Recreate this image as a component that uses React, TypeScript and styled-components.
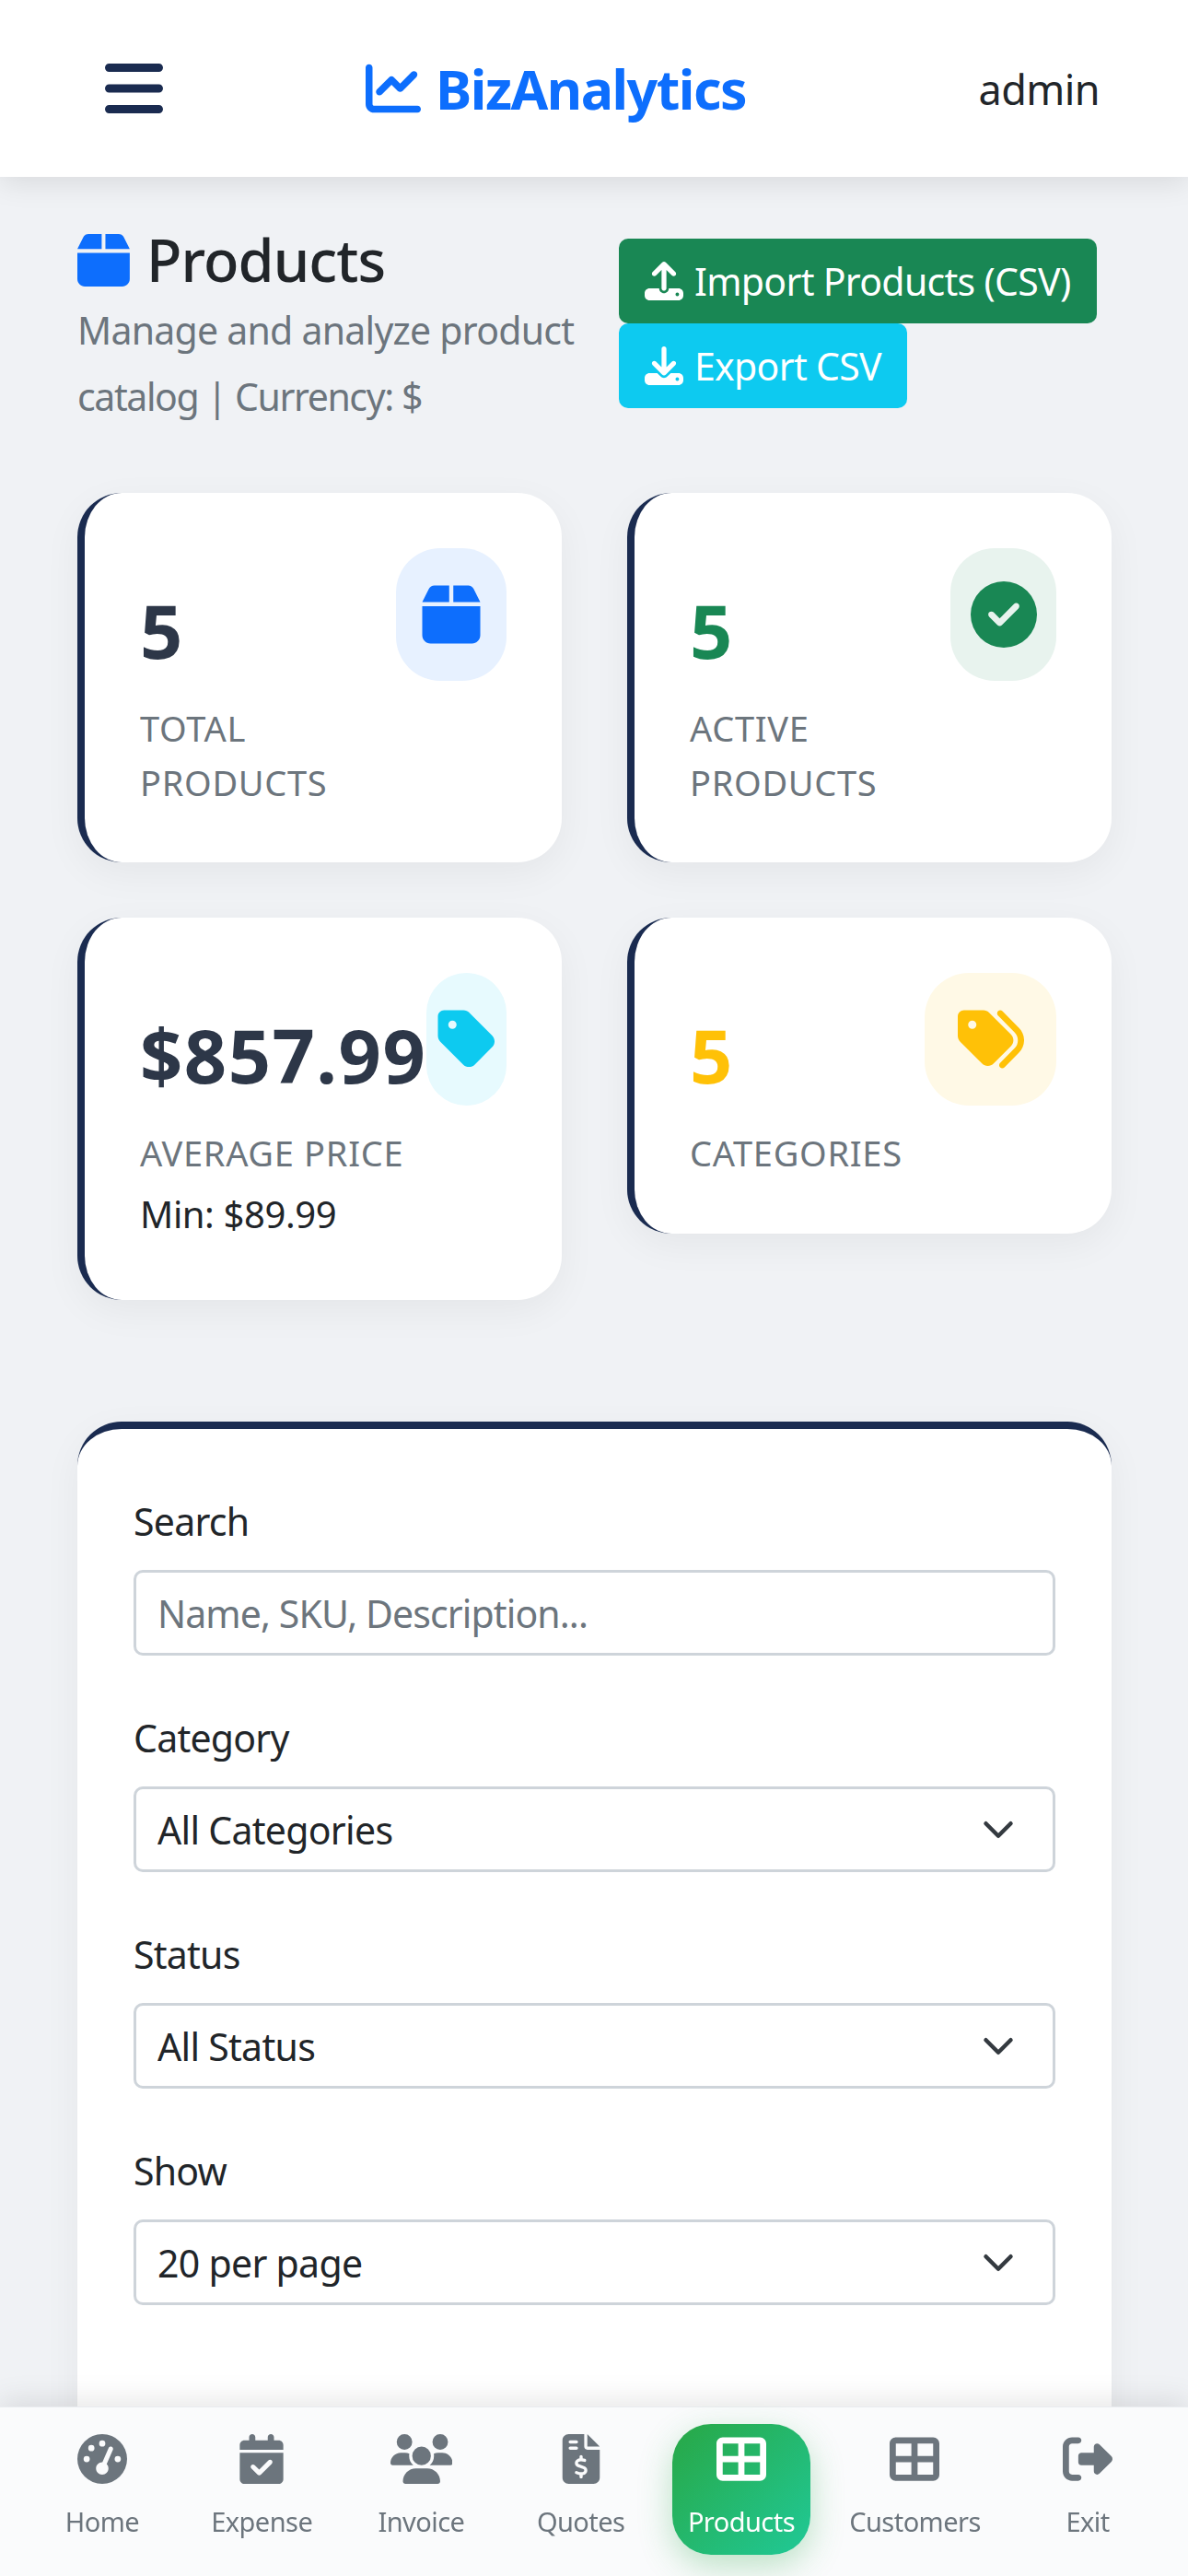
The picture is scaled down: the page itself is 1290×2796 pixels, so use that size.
import React from 'react'
import styled, { createGlobalStyle } from 'styled-components'
import {
  FaBars,
  FaBox,
  FaCalendarCheck,
  FaChartLine,
  FaCircleCheck,
  FaDownload,
  FaFileInvoiceDollar,
  FaGaugeHigh,
  FaRightFromBracket,
  FaTableCellsLarge,
  FaTag,
  FaTags,
  FaUpload,
  FaUsers,
} from 'react-icons/fa6'

const GlobalStyle = createGlobalStyle`
  html, body {
    margin: 0;
    padding: 0;
    height: 100%;
    overflow: hidden;
    background: #f0f2f5;
  }
  body {
    font-family: "Noto Sans", "Open Sans", sans-serif;
    color: #212529;
  }
  * { box-sizing: border-box; }
`

const Navbar = styled.header`
  height: 192px;
  background: #fff;
  display: flex;
  align-items: center;
  padding: 0 96px 0 114px;
  box-shadow: 0 6px 30px rgba(0, 0, 0, 0.1);
  position: relative;
  z-index: 1;
`

const MenuButton = styled.button`
  border: 0;
  padding: 0;
  background: none;
  color: #1a2b50;
  display: flex;
  font-size: 72px;
  svg { width: 0.875em; }
`

const Brand = styled.div`
  margin-left: 220px;
  display: flex;
  align-items: center;
  gap: 16px;
  color: #0d6efd;
  font-size: 59px;
  font-weight: 700;
  letter-spacing: -1.5px;
  svg { font-size: 60px; }
`

const UserName = styled.span`
  margin-left: auto;
  font-size: 45px;
  letter-spacing: -0.6px;
`

const Main = styled.main`
  height: 2604px;
  overflow: hidden;
  padding: 54px 83px 0 84px;
`

const PageHead = styled.div`
  display: grid;
  grid-template-columns: 588px 1fr;
  margin-bottom: 69px;
`

const TitleRow = styled.h1`
  margin: 0;
  display: flex;
  align-items: center;
  gap: 18px;
  font-size: 63px;
  line-height: 72px;
  font-weight: 500;
  letter-spacing: -0.9px;
  svg { color: #0d6efd; font-size: 65px; width: 0.875em; }
`

const Subtitle = styled.p`
  margin: 4px 0 0;
  font-size: 41px;
  line-height: 72px;
  letter-spacing: -0.75px;
  color: #6c757d;
`

const CurrencyNote = styled.span`
  letter-spacing: -1.4px;
`

const ButtonStack = styled.div`
  display: flex;
  flex-direction: column;
  align-items: flex-start;
  padding-top: 13px;
`

const ActionButton = styled.button<{ $bg: string }>`
  border: 0;
  height: 92px;
  padding: 0 28px;
  display: flex;
  align-items: center;
  gap: 12px;
  border-radius: 10px;
  background: ${(p) => p.$bg};
  color: #fff;
  font: inherit;
  font-size: 41px;
  letter-spacing: -0.7px;
  svg { font-size: 42px; }
`

const StatGrid = styled.section`
  display: grid;
  grid-template-columns: 526px 526px;
  justify-content: space-between;
  row-gap: 60px;
  align-items: start;
  margin-bottom: 132px;
`

const StatCard = styled.article<{ $height: number }>`
  height: ${(p) => p.$height}px;
  background: #fff;
  border-left: 8px solid #1a2b50;
  border-radius: 48px;
  padding: 60px 60px 0 60px;
  display: flex;
  justify-content: space-between;
  align-items: flex-start;
  box-shadow: 0 12px 42px rgba(0, 0, 0, 0.05);
`

const StatBody = styled.div`
  padding-top: 37px;
`

const StatValue = styled.div<{ $color: string }>`
  font-size: 81px;
  line-height: 104px;
  font-weight: 700;
  letter-spacing: 1.5px;
  color: ${(p) => p.$color};
`

const StatLabel = styled.div`
  margin-top: 25px;
  font-size: 38px;
  line-height: 59px;
  letter-spacing: 0.7px;
  color: #6c757d;
`

const StatNote = styled.div`
  margin-top: 7px;
  font-size: 40px;
  line-height: 59px;
  letter-spacing: -0.4px;
`

const IconBox = styled.div<{ $bg: string; $color: string; $width: number }>`
  flex: none;
  width: ${(p) => p.$width}px;
  height: 144px;
  border-radius: 48px;
  display: flex;
  align-items: center;
  justify-content: center;
  background: ${(p) => p.$bg};
  color: ${(p) => p.$color};
  font-size: 72px;
`

const FilterCard = styled.section`
  min-height: 1400px;
  background: #fff;
  border-top: 8px solid #1a2b50;
  border-radius: 48px;
  padding: 70px 61px;
  box-shadow: 0 12px 42px rgba(0, 0, 0, 0.05);
`

const Field = styled.div`
  margin-bottom: 59px;
`

const FieldLabel = styled.label`
  display: block;
  margin-bottom: 23px;
  font-size: 41px;
  line-height: 60px;
  letter-spacing: -0.75px;
`

const TextInput = styled.input`
  display: block;
  width: 100%;
  height: 93px;
  padding: 0 23px;
  border: 3px solid #ced4da;
  border-radius: 10px;
  background: #fff;
  font: inherit;
  font-size: 41px;
  letter-spacing: -0.9px;
  color: #212529;
  &::placeholder { color: #6c757d; opacity: 1; }
`

const SelectInput = styled.select`
  display: block;
  width: 100%;
  height: 93px;
  padding: 0 23px;
  border: 3px solid #ced4da;
  border-radius: 10px;
  appearance: none;
  font: inherit;
  font-size: 41px;
  letter-spacing: -0.7px;
  color: #212529;
  background: #fff url("data:image/svg+xml,%3csvg xmlns='http://www.w3.org/2000/svg' viewBox='0 0 16 16'%3e%3cpath fill='none' stroke='%23343a40' stroke-linecap='round' stroke-linejoin='round' stroke-width='2' d='m2 5 6 6 6-6'/%3e%3c/svg%3e") no-repeat right 41px center / 36px 36px;
`

const BottomNav = styled.nav`
  position: fixed;
  left: 0;
  right: 0;
  bottom: 0;
  height: 184px;
  padding: 18px 35px 0 37px;
  display: flex;
  justify-content: space-between;
  align-items: flex-start;
  background: #fafbfc;
  border-top: 1px solid #e9ecef;
  box-shadow: 0 -6px 30px rgba(0, 0, 0, 0.1);
`

const NavItem = styled.a<{ $active?: boolean }>`
  min-width: 148px;
  height: 142px;
  padding: 11px 17px 0;
  border-radius: 42px;
  display: flex;
  flex-direction: column;
  align-items: center;
  color: ${(p) => (p.$active ? '#fff' : '#6c757d')};
  background: ${(p) => (p.$active ? 'linear-gradient(135deg, #28a745, #20c997)' : 'none')};
  box-shadow: ${(p) => (p.$active ? '0 12px 36px rgba(40, 167, 69, 0.3)' : 'none')};
`

const NavIcon = styled.span`
  height: 54px;
  display: flex;
  align-items: center;
  font-size: 54px;
`

const GroupIcon = styled(FaUsers)`
  width: 1.25em;
`

const NavLabel = styled.span`
  margin-top: 21px;
  font-size: 29px;
  line-height: 40px;
  letter-spacing: -0.55px;
  white-space: nowrap;
`

const stats = [
  { value: '5', color: '#2d3748', label: ['TOTAL', 'PRODUCTS'], height: 401, box: '#e7f1ff', tint: '#0d6efd', width: 120, icon: <FaBox /> },
  { value: '5', color: '#198754', label: ['ACTIVE', 'PRODUCTS'], height: 401, box: '#e8f3ee', tint: '#198754', width: 115, icon: <FaCircleCheck /> },
  { value: '$857.99', color: '#2d3748', label: ['AVERAGE PRICE'], note: 'Min: $89.99', height: 415, box: '#e7fafe', tint: '#0dcaf0', width: 87, icon: <FaTag /> },
  { value: '5', color: '#ffc107', label: ['CATEGORIES'], height: 343, box: '#fff9e6', tint: '#ffc107', width: 143, icon: <FaTags /> },
]

const navItems = [
  { label: 'Home', icon: <FaGaugeHigh /> },
  { label: 'Expense', icon: <FaCalendarCheck /> },
  { label: 'Invoice', icon: <GroupIcon /> },
  { label: 'Quotes', icon: <FaFileInvoiceDollar /> },
  { label: 'Products', icon: <FaTableCellsLarge />, active: true },
  { label: 'Customers', icon: <FaTableCellsLarge /> },
  { label: 'Exit', icon: <FaRightFromBracket /> },
]

const selects = [
  { label: 'Category', value: 'All Categories' },
  { label: 'Status', value: 'All Status' },
  { label: 'Show', value: '20 per page' },
]

export default function App() {
  return (
    <>
      <GlobalStyle />
      <Navbar>
        <MenuButton aria-label="Menu"><FaBars /></MenuButton>
        <Brand><FaChartLine />BizAnalytics</Brand>
        <UserName>admin</UserName>
      </Navbar>

      <Main>
        <PageHead>
          <div>
            <TitleRow><FaBox />Products</TitleRow>
            <Subtitle>Manage and analyze product<br /><CurrencyNote>catalog | Currency: $</CurrencyNote></Subtitle>
          </div>
          <ButtonStack>
            <ActionButton $bg="#198754"><FaUpload />Import Products (CSV)</ActionButton>
            <ActionButton $bg="#0dcaf0"><FaDownload />Export CSV</ActionButton>
          </ButtonStack>
        </PageHead>

        <StatGrid>
          {stats.map((s) => (
            <StatCard key={s.label[0]} $height={s.height}>
              <StatBody>
                <StatValue $color={s.color}>{s.value}</StatValue>
                <StatLabel>
                  {s.label.map((line) => <div key={line}>{line}</div>)}
                </StatLabel>
                {s.note && <StatNote>{s.note}</StatNote>}
              </StatBody>
              <IconBox $bg={s.box} $color={s.tint} $width={s.width}>{s.icon}</IconBox>
            </StatCard>
          ))}
        </StatGrid>

        <FilterCard>
          <Field>
            <FieldLabel>Search</FieldLabel>
            <TextInput placeholder="Name, SKU, Description..." />
          </Field>
          {selects.map((f) => (
            <Field key={f.label}>
              <FieldLabel>{f.label}</FieldLabel>
              <SelectInput defaultValue={f.value}>
                <option>{f.value}</option>
              </SelectInput>
            </Field>
          ))}
        </FilterCard>
      </Main>

      <BottomNav>
        {navItems.map((item) => (
          <NavItem key={item.label} $active={item.active}>
            <NavIcon>{item.icon}</NavIcon>
            <NavLabel>{item.label}</NavLabel>
          </NavItem>
        ))}
      </BottomNav>
    </>
  )
}
